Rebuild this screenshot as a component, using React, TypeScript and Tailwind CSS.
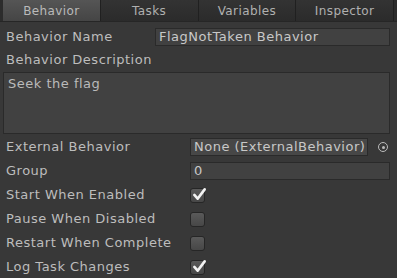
import React from "react";

const tabs = ["Behavior", "Tasks", "Variables", "Inspector"];

function Check({ on }: { on?: boolean }) {
  return (
    <div className="relative flex h-[15px] w-[15px] items-center justify-center rounded-[3px] border border-[#262626] bg-gradient-to-b from-[#5a5a5a] to-[#474747]">
      {on && (
        <svg viewBox="0 0 16 16" className="absolute -top-[2px] left-[1px] h-[15px] w-[15px]">
          <path d="M2.5 8.5 L6 12.5 L13.5 2.5" fill="none" stroke="#f2f2f2" strokeWidth="2.8" strokeLinecap="round" strokeLinejoin="round" />
        </svg>
      )}
    </div>
  );
}

function Row({ label, children }: { label: string; children?: React.ReactNode }) {
  return (
    <div className="flex h-[24px] items-center">
      <div className="w-[185px] shrink-0 pl-[6px]">{label}</div>
      <div className="flex flex-1 items-center pl-[5px] pr-[7px]">{children}</div>
    </div>
  );
}

export default function App() {
  return (
    <div
      className="h-[278px] w-[397px] overflow-hidden bg-[#383838] text-[13px] tracking-[0.5px] text-[#bdbdbd]"
      style={{ fontFamily: '"DejaVu Sans", sans-serif' }}
    >
      <div className="flex h-[22px] border-b border-[#262626] bg-[#2c2c2c] px-[3px] text-[12px] tracking-[0.4px] text-[#b0b0b0]">
        {tabs.map((t, i) => (
          <div
            key={t}
            className={
              "flex flex-1 items-center justify-center border-r border-[#202020] " +
              (i === 0 ? "bg-gradient-to-b from-[#555] to-[#454545] text-[#bababa]" : "bg-gradient-to-b from-[#333] to-[#2b2b2b]")
            }
          >
            {t}
          </div>
        ))}
      </div>

      <div className="flex h-[26px] items-center pt-[4px]">
        <div className="w-[155px] shrink-0 pl-[6px]">Behavior Name</div>
        <div className="mr-[7px] flex h-[18px] flex-1 items-center border border-[#2a2a2a] bg-[#414141] pl-[3px] text-[#c8c8c8]">
          FlagNotTaken Behavior
        </div>
      </div>
      <div className="flex h-[24px] items-center pl-[6px]">Behavior Description</div>
      <div className="mx-[3px] mr-[7px] h-[62px] border border-[#2a2a2a] bg-[#414141] px-[4px] pt-[1px] text-[#bababa]">
        Seek the flag
      </div>

      <div className="pt-[1px]">
        <Row label="External Behavior">
          <div className="flex h-[18px] w-[178px] items-center overflow-hidden whitespace-nowrap border border-[#2a2a2a] bg-[#474747] pl-[3px] text-[#c8c8c8]">
            None (ExternalBehavior)
          </div>
          <div className="ml-auto mr-[2px] flex h-[10px] w-[10px] items-center justify-center rounded-full border-[1.5px] border-[#bbb]">
            <div className="h-[3px] w-[3px] rounded-full bg-[#bbb]" />
          </div>
        </Row>
        <Row label="Group">
          <div className="flex h-[18px] flex-1 items-center border border-[#2a2a2a] bg-[#414141] pl-[3px] text-[#c8c8c8]">
            0
          </div>
        </Row>
        <Row label="Start When Enabled">
          <Check on />
        </Row>
        <Row label="Pause When Disabled">
          <Check />
        </Row>
        <Row label="Restart When Complete">
          <Check />
        </Row>
        <Row label="Log Task Changes">
          <Check on />
        </Row>
      </div>
    </div>
  );
}
